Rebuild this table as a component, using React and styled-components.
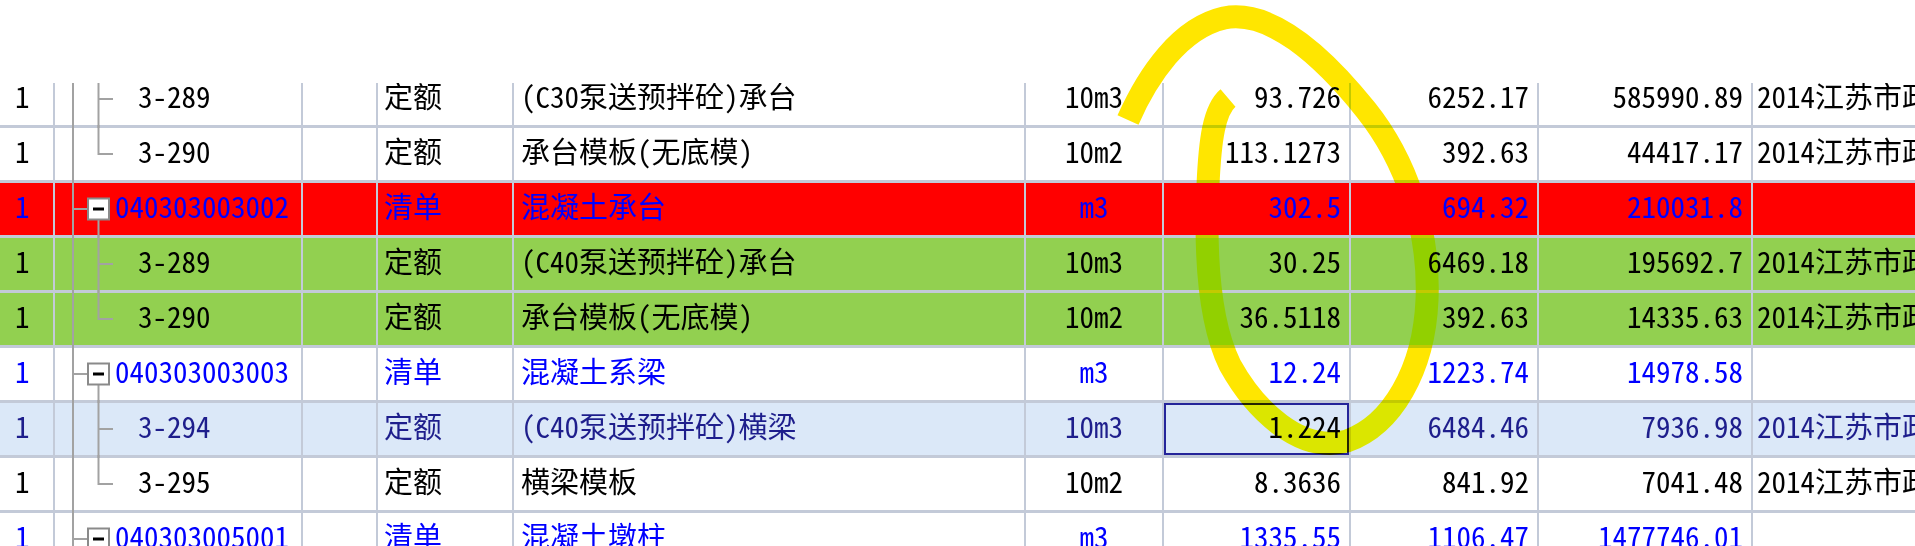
import React from 'react';
import styled, { createGlobalStyle } from 'styled-components';

const GlobalStyle = createGlobalStyle`
  html, body {
    margin: 0;
    padding: 0;
    background: #ffffff;
  }
  body {
    overflow: hidden;
  }
`;

// column right edges: 55 303 378 514 1026 1164 1351 1539 1753
const COLS = '55px 248px 75px 136px 512px 138px 187px 188px 214px 162px';
const GRID_LINE = '#c3cad8';

const Page = styled.div`
  position: relative;
  width: 1915px;
  height: 546px;
  overflow: hidden;
  background: #ffffff;
  font-family: "Noto Sans CJK SC", "Noto Sans CJK TC", sans-serif;
  font-size: 29px;
  font-feature-settings: "hwid" 1;
`;

const Viewport = styled.div`
  margin-top: 83px;
  height: 463px;
  overflow: hidden;
`;

// the grid is scrolled, so its first row only shows its lower part;
// cell content is laid from the row bottom so both kinds line up
const Row = styled.div`
  display: grid;
  grid-template-columns: ${COLS};
  grid-template-rows: minmax(0, 1fr);
  height: ${p => (p.$short ? 45 : 55)}px;
  box-sizing: border-box;
  border-bottom: 3px solid ${GRID_LINE};
  background: ${p => p.$bg};
  color: ${p => p.$ink};
`;

const Cell = styled.div`
  display: flex;
  align-items: flex-end;
  min-width: 0;
  min-height: 0;
  padding-bottom: 15px;
  overflow: hidden;
  white-space: nowrap;
  line-height: 1;
  border-right: 2px solid ${GRID_LINE};
`;

const IndexCell = styled(Cell)`
  padding-left: 15px;
`;

const TreeCell = styled(Cell)`
  padding-bottom: 0;
  overflow: visible;
`;

const Code = styled.span`
  margin-left: ${p => (p.$child ? 23 : 0)}px;
  margin-bottom: 15px;
`;

const TypeCell = styled(Cell)`
  padding-left: 6px;
`;

const NameCell = styled(Cell)`
  padding-left: 7px;
`;

const UnitCell = styled(Cell)`
  justify-content: center;
`;

const NumCell = styled(Cell)`
  justify-content: flex-end;
  padding-right: 8px;
  ${p => p.$active && `
    color: #000000;
    box-shadow: inset 0 0 0 2px #25259a;
  `}
`;

const LibCell = styled(Cell)`
  padding-left: 4px;
  border-right: none;
`;

const Twig = styled.svg`
  flex: none;
  width: 60px;
  height: 52px;
  overflow: visible;
`;

const Annotation = styled.svg`
  position: absolute;
  left: 0;
  top: 0;
  width: 1915px;
  height: 546px;
  pointer-events: none;
  mix-blend-mode: darken;
`;

const LIB = '2014江苏市政工程计价定额';

const rows = [
  { kind: 'child', tone: 'plain', code: '3-289', type: '定额', name: '(C30泵送预拌砼)承台', unit: '10m3', qty: '93.726', price: '6252.17', total: '585990.89', lib: LIB },
  { kind: 'last', tone: 'plain', code: '3-290', type: '定额', name: '承台模板(无底模)', unit: '10m2', qty: '113.1273', price: '392.63', total: '44417.17', lib: LIB },
  { kind: 'parent', tone: 'red', code: '040303003002', type: '清单', name: '混凝土承台', unit: 'm3', qty: '302.5', price: '694.32', total: '210031.8', lib: '' },
  { kind: 'child', tone: 'green', code: '3-289', type: '定额', name: '(C40泵送预拌砼)承台', unit: '10m3', qty: '30.25', price: '6469.18', total: '195692.7', lib: LIB },
  { kind: 'last', tone: 'green', code: '3-290', type: '定额', name: '承台模板(无底模)', unit: '10m2', qty: '36.5118', price: '392.63', total: '14335.63', lib: LIB },
  { kind: 'parent', tone: 'plain', code: '040303003003', type: '清单', name: '混凝土系梁', unit: 'm3', qty: '12.24', price: '1223.74', total: '14978.58', lib: '' },
  { kind: 'child', tone: 'selected', code: '3-294', type: '定额', name: '(C40泵送预拌砼)横梁', unit: '10m3', qty: '1.224', price: '6484.46', total: '7936.98', lib: LIB, active: true },
  { kind: 'last', tone: 'plain', code: '3-295', type: '定额', name: '横梁模板', unit: '10m2', qty: '8.3636', price: '841.92', total: '7041.48', lib: LIB },
  { kind: 'parent', tone: 'plain', code: '040303005001', type: '清单', name: '混凝土墩柱', unit: 'm3', qty: '1335.55', price: '1106.47', total: '1477746.01', lib: '' },
];

const backgrounds = {
  plain: '#ffffff',
  red: '#ff0000',
  green: '#92d050',
  selected: '#dbe8f8',
};

const inkFor = row => {
  if (row.kind === 'parent') return '#0000ff';
  if (row.tone === 'selected') return '#1e1e8c';
  return '#000000';
};

const TreeLines = ({ kind }) => (
  <Twig viewBox="0 0 60 52">
    <line x1="18" y1="-3" x2="18" y2="55" stroke="#a2a2a2" strokeWidth="2" />
    {kind === 'parent' ? (
      <>
        <line x1="18" y1="26" x2="33" y2="26" stroke="#a2a2a2" strokeWidth="2" />
        <line x1="43.5" y1="36" x2="43.5" y2="55" stroke="#a2a2a2" strokeWidth="2" />
        <rect x="33" y="15.5" width="21" height="21" fill="#ffffff" stroke="#8a8a8a" strokeWidth="2" />
        <line x1="38" y1="26" x2="49" y2="26" stroke="#000000" strokeWidth="3" />
      </>
    ) : (
      <>
        <line x1="43.5" y1="-3" x2="43.5" y2={kind === 'last' ? 27 : 55} stroke="#a2a2a2" strokeWidth="2" />
        <line x1="43.5" y1="26" x2="58" y2="26" stroke="#a2a2a2" strokeWidth="2" />
      </>
    )}
  </Twig>
);

const App = () => {
  return (
    <Page>
      <GlobalStyle />
      <Viewport>
        {rows.map((row, i) => (
          <Row key={i} $short={i === 0} $bg={backgrounds[row.tone]} $ink={inkFor(row)}>
            <IndexCell>1</IndexCell>
            <TreeCell>
              <TreeLines kind={row.kind} />
              <Code $child={row.kind !== 'parent'}>{row.code}</Code>
            </TreeCell>
            <Cell />
            <TypeCell>{row.type}</TypeCell>
            <NameCell>{row.name}</NameCell>
            <UnitCell>{row.unit}</UnitCell>
            <NumCell $active={row.active}>{row.qty}</NumCell>
            <NumCell>{row.price}</NumCell>
            <NumCell>{row.total}</NumCell>
            <LibCell>{row.lib}</LibCell>
          </Row>
        ))}
      </Viewport>
      <Annotation viewBox="0 0 1915 546">
        <path
          d="M 1128 120 C 1148 75, 1180 28, 1224 18 C 1270 9, 1322 55, 1366 110 C 1406 160, 1430 230, 1427 300 C 1424 370, 1392 425, 1347 441 C 1300 454, 1255 410, 1230 365 C 1208 320, 1205 250, 1208 185 C 1210 140, 1214 110, 1228 98"
          fill="none"
          stroke="#ffe600"
          strokeWidth="23"
        />
      </Annotation>
    </Page>
  );
};

export default App;
